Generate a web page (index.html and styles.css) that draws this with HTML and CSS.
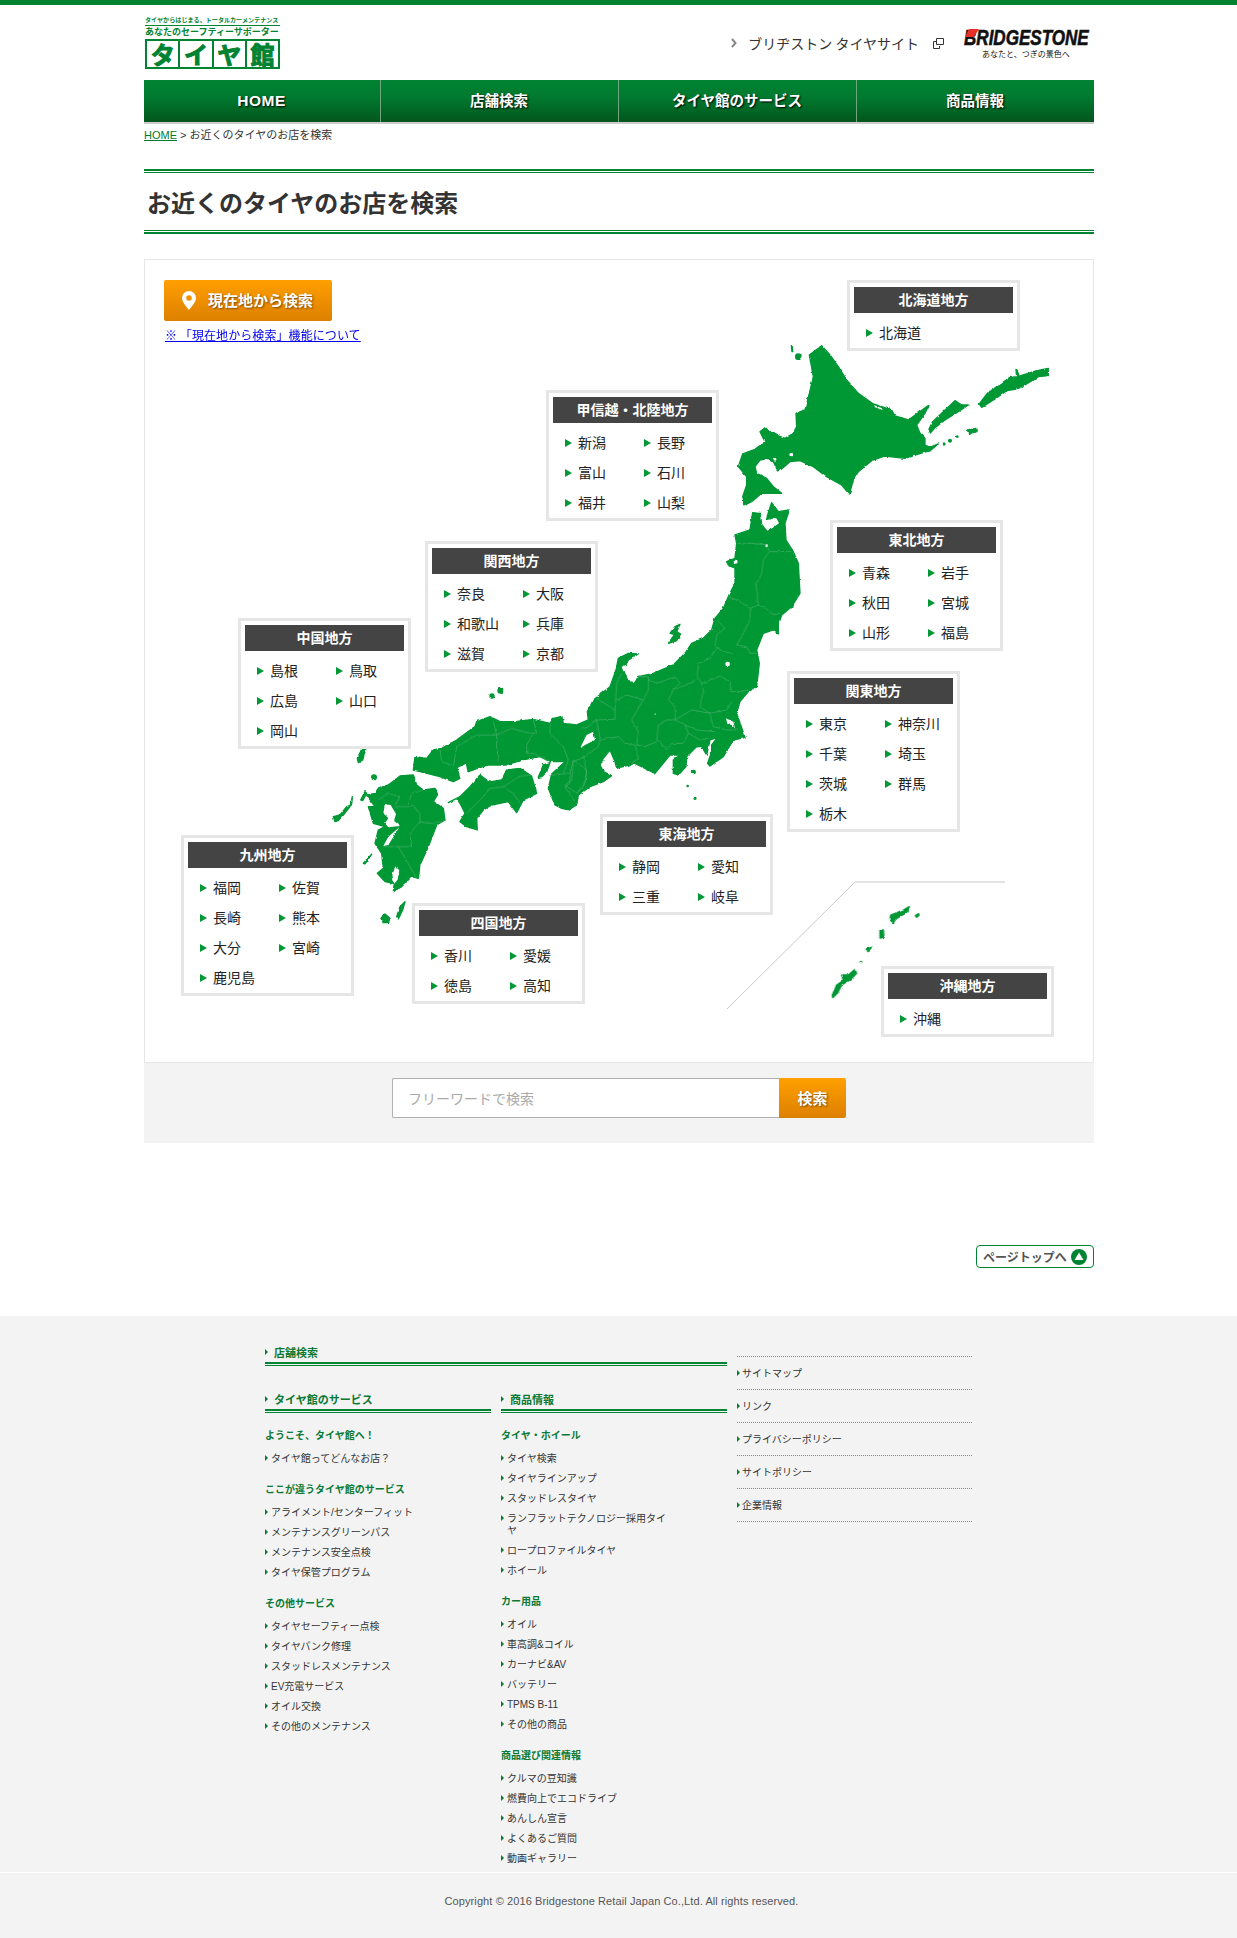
FILE: index.html
```html
<!DOCTYPE html>
<html lang="ja">
<head>
<meta charset="utf-8">
<title>お近くのタイヤのお店を検索</title>
<link rel="stylesheet" href="styles.css">
</head>
<body>
<div class="top-bar"></div>
<div class="wrap">
  <header class="site-header">
    <a class="logo">
      <span class="logo-small">タイヤからはじまる、トータルカーメンテナンス</span>
      <span class="logo-mid">あなたのセーフティーサポーター</span>
      <span class="logo-boxes"><b>タ</b><b>イ</b><b>ヤ</b><b>館</b></span>
    </a>
    <div class="header-right">
      <a class="ext-link">
        <svg class="chev" width="6" height="10" viewBox="0 0 6 10"><path d="M1 1l3.500 4L1 9" fill="none" stroke="#888" stroke-width="2"/></svg>
        <span>ブリヂストン タイヤサイト</span>
        <svg class="ext" width="11" height="11" viewBox="0 0 11 11"><path d="M3.500.5h7v6h-7z" fill="none" stroke="#333"/><path d="M3 3.500H.5v7h6V8" fill="none" stroke="#333"/></svg>
      </a>
      <div class="bs-logo">
        <svg class="bs-red" width="14" height="8" viewBox="0 0 14 8"><path d="M4 0h10L9 8H0z" fill="#e8302a"/></svg>
        <span class="bs-name">BRIDGESTONE</span>
        <span class="bs-sub">あなたと、つぎの景色へ</span>
      </div>
    </div>
  </header>
  <nav class="gnav">
    <a class="home">HOME</a><a>店舗検索</a><a>タイヤ館のサービス</a><a>商品情報</a>
  </nav>
  <div class="crumb"><a>HOME</a> &gt; お近くのタイヤのお店を検索</div>
  <div class="title-outer"><h1>お近くのタイヤのお店を検索</h1></div>

  <section class="map-card">
    <svg class="map" viewBox="144 259 950 803" width="950" height="803">
      <defs>
        <filter id="rough" x="-5%" y="-5%" width="110%" height="110%">
          <feTurbulence type="fractalNoise" baseFrequency=".22" numOctaves="2" seed="4"/>
          <feDisplacementMap in="SourceGraphic" scale="2.600" xChannelSelector="R" yChannelSelector="G"/>
        </filter>
      </defs>
      <g filter="url(#rough)">
      <g class="land">
        <g transform="translate(730 330) scale(.3333)">
          <path d="M275 47 300 75 325 110 350 150 385 190 430 222 485 240 495 258 535 270 570 245 597 225 585 250 560 285 570 310 585 325 585 345 600 352 625 342 600 362 555 375 525 385 465 378 425 392 385 425 370 450 358 492 335 465 290 440 250 410 210 392 180 395 145 425 130 395 115 385 90 390 75 410 80 430 110 445 130 470 155 490 125 490 95 490 65 515 45 525 38 500 50 465 50 440 25 410 38 372 75 358 105 335 90 305 105 293 130 312 165 325 190 310 200 290 198 250 225 240 238 190 250 140 238 75Z"/>
          <path d="M597 298 608 275 640 245 675 212 695 225 715 225 685 245 645 270 615 293 603 307Z"/>
          <path d="M748 222 772 190 815 160 838 143 860 140 858 118 870 138 920 122 955 115 955 137 925 140 885 165 855 178 830 182 795 207 755 232Z"/>
          <path d="M712 300 740 295 742 303 718 313Z"/>
          <path d="M184 47h3l1 18h-2Z"/>
          <circle cx="205" cy="80" r="8"/><circle cx="660" cy="332" r="4"/><circle cx="642" cy="342" r="3"/><circle cx="682" cy="320" r="2"/>
        </g>
        <g transform="translate(560 510) scale(.3333)">
          <path d="M578 8 600 10 606 45 622 65 640 55 660 40 650 22 620 28 625 8 635 -22 655 5 688 0 675 40 678 90 700 125 715 160 720 250 695 290 665 315 655 345 655 372 640 360 610 370 590 420 598 460 590 530 565 545 540 575 530 610 555 682 520 690 490 740 450 768 443 760 455 725 455 705 472 683 450 690 440 735 425 710 410 710 380 740 378 770 355 795 340 790 340 750 360 735 330 735 285 790 225 760 170 775 165 755 150 720 130 745 120 765 130 785 155 797 130 815 90 830 55 855 50 885 25 900 5 895 -15 885 -35 835 -25 792 15 755 5 620 10 640 50 645 85 630 82 605 100 570 150 530 168 480 175 445 205 430 235 432 205 450 190 480 205 515 225 518 235 500 280 490 340 465 375 430 395 400 430 385 455 360 465 325 490 295 505 260 525 220 525 175 505 165 500 155 525 145 530 100 525 75 570 60Z"/>
          <path d="M360 343 345 350 330 370 345 372 325 400 350 392 362 372 350 365Z"/>
          <circle cx="401" cy="786" r="5"/><circle cx="405" cy="865" r="3"/><circle cx="383" cy="828" r="2"/>
        </g>
        <g transform="translate(320 690) scale(.3333)">
          <path d="M725 80 700 85 690 100 640 88 585 95 540 95 510 80 470 95 465 110 410 150 365 175 340 180 320 205 285 200 280 240 300 245 360 260 400 275 420 265 410 230 445 245 505 225 560 225 605 210 660 200 690 215 735 215Z"/>
          <path d="M240 258 280 255 290 285 310 300 345 295 355 310 340 335 370 355 375 390 350 405 325 470 300 525 295 565 275 560 245 590 220 605 222 585 235 570 240 540 225 525 215 555 220 580 195 575 172 550 190 535 185 490 165 460 175 420 195 410 160 400 145 350 165 350 140 315 165 310 175 295 205 285Z"/>
          <path d="M385 338 420 320 450 290 480 255 500 270 515 275 545 270 560 240 600 235 635 258 650 310 610 330 590 368 565 335 515 345 490 360 470 385 472 420 440 410 420 395 435 370 420 340 410 325Z"/>
          <path d="M655 262 670 225 690 218 680 245 665 260Z"/>
          <path d="M125 178 138 175 128 210 115 218 112 205Z"/>
          <circle cx="162" cy="262" r="7"/><circle cx="541" cy="2" r="7"/><circle cx="516" cy="18" r="6"/>
          <path d="M40 380 60 375 80 350 95 345 97 320 90 350 70 375 55 392 45 395Z"/>
          <path d="M122 330 135 305 140 310 128 332Z"/>
          <path d="M195 672 210 685 205 698 190 698 183 685Z"/>
          <path d="M255 635 248 660 235 687 230 680 240 650Z"/>
          <path d="M130 520 155 493 150 500 135 522Z"/>
        </g>
        <g transform="translate(700 850) scale(.3333)">
          <path d="M572 195 610 180 628 170 625 185 590 205 580 218 570 210Z"/>
          <path d="M646 197 656 191 657 196 650 202Z"/>
          <path d="M540 240 550 240 552 262 540 264Z"/>
          <path d="M498 297 515 292 505 302Z"/>
          <circle cx="483" cy="336" r="2"/>
          <path d="M397 435 410 405 430 392 425 375 445 375 465 358 470 370 450 390 425 405 412 430 398 443Z"/>
        </g>
      </g>
      <g class="lakes">
        <g transform="translate(730 330) scale(.3333)">
          <circle cx="135" cy="388" r="4"/><circle cx="183" cy="374" r="5"/><path d="M432 226 455 234 458 240 435 232Z"/>
        </g>
        <g transform="translate(560 510) scale(.3333)">
          <circle cx="620" cy="107" r="4"/><circle cx="527" cy="155" r="6"/><circle cx="503" cy="462" r="7"/><circle cx="288" cy="612" r="2"/><circle cx="222" cy="766" r="4"/>
          <path d="M498 625 520 635 525 655 510 640 503 645Z"/>
          <path d="M185 470 198 465 200 482 190 484Z"/>
        </g>
        <g transform="translate(320 690) scale(.3333)">
          <path d="M780 175 800 135 820 125 825 150 795 165Z"/>
          <path d="M195 342 212 345 228 372 222 392 240 408 205 412 195 400 205 385 190 370Z"/>
          <path d="M238 412 205 440 190 468 205 465Z"/>
          <path d="M415 232 438 224 443 250 425 262Z"/><path d="M465 240 505 228 495 250 470 255Z"/>
        </g>
      </g>
      <g class="pref">
        <g transform="translate(560 510) scale(.3333)">
          <path d="M530 100 575 100 620 105 628 125 610 150 605 190 588 225 595 285 570 295"/>
          <path d="M628 125 650 125 695 125"/>
          <path d="M595 285 625 300 640 315 660 310"/>
          <path d="M505 260 540 275 570 295 570 330 545 380 530 405 560 410 570 430 590 430"/>
          <path d="M470 330 495 355 470 375 465 410 490 425 520 430"/>
          <path d="M470 415 450 445 415 460 412 500 425 520"/>
          <path d="M412 505 390 520 340 540 325 570 345 590 345 630"/>
          <path d="M425 520 480 498 510 515 512 545 540 545 565 540"/>
          <path d="M425 520 430 545 420 590 450 610 500 600 515 575"/>
          <path d="M345 630 395 600 450 610 460 650 500 660 530 660"/>
          <path d="M345 630 375 645 410 660 465 665"/>
          <path d="M375 645 385 670 420 690 445 685"/>
          <path d="M235 500 265 500 265 540 250 570 215 630"/>
          <path d="M265 510 290 520 345 500 360 520 340 540"/>
          <path d="M170 570 200 555 250 570"/>
          <path d="M110 565 165 600 170 520 185 490"/>
          <path d="M165 600 165 628 110 630 85 650 60 660"/>
          <path d="M215 630 235 665 230 705 255 710 290 695 295 645 320 630 345 630"/>
          <path d="M295 690 320 720 335 700 370 700 385 670"/>
          <path d="M120 690 145 685 175 680 195 700 225 705 235 745 215 760"/>
          <path d="M110 630 120 690 115 710 75 740 40 755 35 810 15 825 50 850"/>
          <path d="M70 735 80 790 70 830 50 850"/>
        </g>
        <g transform="translate(320 690) scale(.3333)">
          <path d="M520 95 530 135 575 115 610 125 635 130 650 130 640 90"/>
          <path d="M530 135 530 170 535 215"/>
          <path d="M640 130 620 165 620 190 640 190 690 215"/>
          <path d="M530 135 470 135 410 170 400 230"/>
          <path d="M360 180 365 215 395 225"/>
          <path d="M690 100 690 130 730 170 745 210 730 250"/>
          <path d="M695 255 750 250 750 280 735 290 765 335"/>
          <path d="M750 250 760 210 800 240 795 280 770 310"/>
          <path d="M440 370 490 320 510 295 550 290 600 258 635 255"/>
          <path d="M550 290 580 310 600 340"/>
          <path d="M175 330 205 310 240 320 225 345"/>
          <path d="M265 345 275 310 310 300"/>
          <path d="M225 350 265 350 280 345 300 370 300 395 325 400 370 395"/>
          <path d="M300 395 270 430 275 470 235 470 190 470"/>
          <path d="M235 470 270 530 290 565"/>
        </g>
      </g>
      </g>
      <path class="okinawa-line" d="M727 1009 855 882H1005"/>
    </svg>

    <a class="gps-btn">
      <svg width="14" height="19" viewBox="0 0 14 19"><path fill-rule="evenodd" d="M7 0a7 7 0 0 1 7 7c0 4-4 8-7 12C4 15 0 11 0 7a7 7 0 0 1 7-7Zm0 4.200a2.800 2.800 0 1 0 0 5.600 2.800 2.800 0 0 0 0-5.600Z" fill="#fff"/></svg>
      <span>現在地から検索</span>
    </a>
    <a class="gps-note">※ 「現在地から検索」機能について</a>

    <div class="region r-hokkaido"><h2>北海道地方</h2><ul><li>北海道</li></ul></div>
    <div class="region r-koshin"><h2>甲信越・北陸地方</h2><ul><li>新潟</li><li>長野</li><li>富山</li><li>石川</li><li>福井</li><li>山梨</li></ul></div>
    <div class="region r-tohoku"><h2>東北地方</h2><ul><li>青森</li><li>岩手</li><li>秋田</li><li>宮城</li><li>山形</li><li>福島</li></ul></div>
    <div class="region r-kansai"><h2>関西地方</h2><ul><li>奈良</li><li>大阪</li><li>和歌山</li><li>兵庫</li><li>滋賀</li><li>京都</li></ul></div>
    <div class="region r-chugoku"><h2>中国地方</h2><ul><li>島根</li><li>鳥取</li><li>広島</li><li>山口</li><li>岡山</li></ul></div>
    <div class="region r-kanto"><h2>関東地方</h2><ul><li>東京</li><li>神奈川</li><li>千葉</li><li>埼玉</li><li>茨城</li><li>群馬</li><li>栃木</li></ul></div>
    <div class="region r-tokai"><h2>東海地方</h2><ul><li>静岡</li><li>愛知</li><li>三重</li><li>岐阜</li></ul></div>
    <div class="region r-shikoku"><h2>四国地方</h2><ul><li>香川</li><li>愛媛</li><li>徳島</li><li>高知</li></ul></div>
    <div class="region r-kyushu"><h2>九州地方</h2><ul><li>福岡</li><li>佐賀</li><li>長崎</li><li>熊本</li><li>大分</li><li>宮崎</li><li>鹿児島</li></ul></div>
    <div class="region r-okinawa"><h2>沖縄地方</h2><ul><li>沖縄</li></ul></div>
  </section>

  <div class="search-bar">
    <div class="search-field">フリーワードで検索</div>
    <a class="search-btn">検索</a>
  </div>

  <div class="pagetop-row">
    <a class="pagetop">ページトップへ
      <svg width="16" height="16" viewBox="0 0 16 16"><circle cx="8" cy="8" r="8" fill="#008332"/><path d="M8 3.500 12.500 11h-9Z" fill="#fff"/></svg>
    </a>
  </div>
</div>

<footer class="site-footer">
  <div class="f-grid">
    <div class="f-main">
      <div class="f-head">店舗検索</div>
      <div class="f-cols">
        <div>
          <div class="f-head">タイヤ館のサービス</div>
          <h3>ようこそ、タイヤ館へ！</h3>
          <ul><li>タイヤ館ってどんなお店？</li></ul>
          <h3>ここが違うタイヤ館のサービス</h3>
          <ul><li>アライメント/センターフィット</li><li>メンテナンスグリーンパス</li><li>メンテナンス安全点検</li><li>タイヤ保管プログラム</li></ul>
          <h3>その他サービス</h3>
          <ul><li>タイヤセーフティー点検</li><li>タイヤパンク修理</li><li>スタッドレスメンテナンス</li><li>EV充電サービス</li><li>オイル交換</li><li>その他のメンテナンス</li></ul>
        </div>
        <div>
          <div class="f-head">商品情報</div>
          <h3>タイヤ・ホイール</h3>
          <ul><li>タイヤ検索</li><li>タイヤラインアップ</li><li>スタッドレスタイヤ</li><li>ランフラットテクノロジー採用タイヤ</li><li>ロープロファイルタイヤ</li><li>ホイール</li></ul>
          <h3>カー用品</h3>
          <ul><li>オイル</li><li>車高調&amp;コイル</li><li>カーナビ&amp;AV</li><li>バッテリー</li><li>TPMS B-11</li><li>その他の商品</li></ul>
          <h3>商品選び関連情報</h3>
          <ul><li>クルマの豆知識</li><li>燃費向上でエコドライブ</li><li>あんしん宣言</li><li>よくあるご質問</li><li>動画ギャラリー</li></ul>
        </div>
      </div>
    </div>
    <ul class="f-side">
      <li>サイトマップ</li><li>リンク</li><li>プライバシーポリシー</li><li>サイトポリシー</li><li>企業情報</li>
    </ul>
  </div>
  <div class="copyright">Copyright © 2016 Bridgestone Retail Japan Co.,Ltd. All rights reserved.</div>
</footer>
</body>
</html>
```
FILE: styles.css
```css
*{box-sizing:border-box}
html,body{margin:0;padding:0}
body{background:#fff;color:#333;font-family:"Noto Sans CJK JP","Noto Sans",sans-serif}
ul{list-style:none;margin:0;padding:0}
h1,h2,h3{margin:0}
.top-bar{height:5px;background:#008330}
.wrap{width:950px;margin:0 auto 0 144px}

/* header */
.site-header{height:75px;display:flex;justify-content:space-between;padding-top:10px}
.logo{display:flex;flex-direction:column;width:135px;margin-left:1px;color:#008332}
.logo-small{font-size:6.100px;font-weight:700;line-height:10px;height:11px;white-space:nowrap;border-bottom:1px solid #008332}
.logo-mid{font-size:9px;line-height:12px;height:13px;font-weight:700;white-space:nowrap}
.logo-boxes{display:grid;grid-template-columns:repeat(4,1fr);height:30px;border:1px solid #008332}
.logo-boxes b{display:flex;align-items:center;justify-content:center;font-size:24px;line-height:1;font-weight:700;-webkit-text-stroke:1px #008332;border:1px solid #008332}
.header-right{display:flex;align-items:flex-start;padding-right:5px}
.ext-link{display:flex;align-items:center;height:18px;margin-top:19px;font-size:14px;color:#333}
.chev{margin-right:11px}
.ext{margin:0 20px 0 14px}
.bs-logo{position:relative;width:125px;height:45px;margin-top:14px;color:#111}
.bs-red{position:absolute;left:1px;top:0;z-index:1}
.bs-name{display:block;font:italic 700 22px/18px "Liberation Sans",sans-serif;transform:scaleX(.775);transform-origin:0 0;white-space:nowrap;-webkit-text-stroke:.6px #111}
.bs-sub{display:block;margin-top:1px;padding-left:18px;font-size:8px;line-height:12px;white-space:nowrap}

/* nav */
.gnav{display:grid;grid-template-columns:236px 238px 238px 238px;height:44px;border-bottom:2px solid #ccc;background:linear-gradient(#008332,#007a2f 40%,#02561d)}
.gnav a{display:flex;align-items:center;justify-content:center;padding:0 1px 3px 0;color:#fff;font-size:14.500px;font-weight:700;text-shadow:1px 1px 2px #000;border-left:1px solid #6fa57f}
.gnav a.home{border-left:0;padding:0 1px 0 0;letter-spacing:.5px;font-family:"Liberation Sans",sans-serif;font-size:15.500px}

.crumb{height:22px;margin-bottom:23px;font-family:"Liberation Sans","Noto Sans CJK JP",sans-serif;font-size:11px;line-height:23px;color:#333}
.crumb a{color:#007a30;text-decoration:underline}

.title-outer{height:65px;padding:1px 0;border-top:2px solid #008332;border-bottom:2px solid #008332}
.title-outer h1{height:100%;padding-left:3px;border-top:1px solid #008332;border-bottom:1px solid #008332;font-size:24px;line-height:57px;font-weight:700;color:#333}

/* map */
.map-card{position:relative;height:804px;margin-top:25px;border:1px solid #e6e6e6}
.map{position:absolute;left:-1px;top:-1px;display:block}
.land{fill:#039735;stroke:#039735;stroke-width:4;stroke-linejoin:round}
.lakes{fill:#fff}
.pref path{fill:none;stroke:#5dba7d;stroke-width:1.600}
.okinawa-line{fill:none;stroke:#c8c8c8;stroke-width:1}
.gps-btn{position:absolute;left:19px;top:20px;width:168px;height:41px;display:flex;align-items:center;padding:0 0 2px 18px;gap:12px;border-radius:2px;background:linear-gradient(#ff9f00,#dd8000);color:#fff;font-size:15px;font-weight:700;text-shadow:1px 1px 2px #7a4700}
.gps-btn svg{margin-top:2px}
.gps-note{position:absolute;left:20px;top:66px;font-size:12px;line-height:18px;color:#00e;letter-spacing:.08px;text-decoration:underline;white-space:nowrap}

.region{position:absolute;width:173px;padding:4px 4px 0;border:3px solid #e6e6e6;background:#fff}
.region h2{height:26px;margin:0 0 5px;background:#444;color:#fff;font-size:14px;line-height:24px;font-weight:700;text-align:center}
.region ul{display:grid;grid-template-columns:79px 1fr}
.region li{position:relative;height:30px;padding-left:25px;font-size:14px;line-height:29px;color:#222;white-space:nowrap}
.region li::before{content:"";position:absolute;left:12px;top:11px;border-left:7px solid #039735;border-top:4px solid transparent;border-bottom:4px solid transparent}
.r-hokkaido{left:702px;top:20px}
.r-koshin{left:401px;top:130px}
.r-tohoku{left:685px;top:260px}
.r-kansai{left:280px;top:281px}
.r-chugoku{left:93px;top:358px}
.r-kanto{left:642px;top:411px}
.r-tokai{left:455px;top:554px}
.r-shikoku{left:267px;top:643px}
.r-kyushu{left:36px;top:575px}
.r-okinawa{left:736px;top:706px}

/* search */
.search-bar{height:80px;padding-top:15px;display:flex;justify-content:flex-start;padding-left:248px;background:#f3f3f3}
.search-field{width:387px;height:40px;padding-left:15px;background:#fff;border:1px solid #b0b0b0;border-right:0;border-radius:2px 0 0 2px;font-size:14px;line-height:38px;color:#aaa}
.search-btn{width:67px;height:40px;background:linear-gradient(#ff9f00,#dd8000);border-radius:0 2px 2px 0;color:#fff;font-size:15px;font-weight:700;line-height:39px;text-align:center;text-shadow:1px 1px 2px #7a4700}

.pagetop-row{display:flex;justify-content:flex-end;margin-top:102px}
.pagetop{display:flex;align-items:center;justify-content:space-between;width:118px;height:23px;padding:0 6px;border:1px solid #008332;border-radius:4px;font-size:12px;font-weight:700;color:#555;white-space:nowrap}

/* footer */
.site-footer{margin-top:48px;height:622px;background:#f3f3f3;font-family:"Liberation Sans","Noto Sans CJK JP",sans-serif;font-size:10px}
.f-grid{display:grid;grid-template-columns:462px 235px;column-gap:10px;width:707px;height:556px;margin-left:265px;padding-top:27px}
.f-head{height:21px;padding-left:9px;position:relative;border-bottom:2px solid #008332;box-shadow:0 1px 0 #f3f3f3,0 2px 0 #008332;font-size:11px;line-height:21px;font-weight:700;color:#0a7a35}
.f-head::before{content:"";position:absolute;left:0;top:6px;border-left:3px solid #0a7a35;border-top:3px solid transparent;border-bottom:3px solid transparent}
.f-cols{display:grid;grid-template-columns:226px 226px;column-gap:10px;margin-top:25px}
.f-cols .f-head{height:22px;line-height:22px}
.f-cols .f-head::before{top:7px}
.f-cols h3{height:16px;margin-top:13px;font-size:10px;line-height:18px;font-weight:700;color:#0a7a35}
.f-cols .f-head+h3{margin-top:16px}
.f-cols ul{margin-top:5px;width:172px}
.f-cols li{position:relative;padding:5px 0 3px 6px;line-height:12px;color:#333}
.f-cols li::before,.f-side li::before{content:"";position:absolute;left:0;border-left:3px solid #0a7a35;border-top:3px solid transparent;border-bottom:3px solid transparent}
.f-cols li::before{top:7px}
.f-side{margin-top:13px;border-top:1px dotted #888}
.f-side li{position:relative;height:33px;padding-left:5px;border-bottom:1px dotted #888;line-height:34px;color:#333}
.f-side li::before{top:13px}
.copyright{height:66px;padding-left:6px;border-top:1px solid #fff;font-size:11px;letter-spacing:.1px;line-height:56px;color:#555;text-align:center;white-space:nowrap}
```
